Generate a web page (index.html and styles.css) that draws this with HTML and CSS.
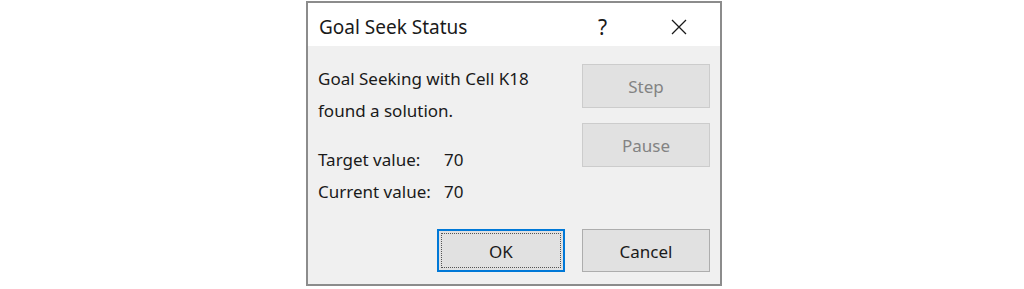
FILE: index.html
```html
<!DOCTYPE html>
<html lang="en">
<head>
  <meta charset="UTF-8">
  <title>Goal Seek Status</title>
  <link rel="stylesheet" href="styles.css">
</head>
<body>
  <div class="dialog">
    <div class="titlebar">
      <span class="title">Goal Seek Status</span>
      <span class="help">?</span>
      <span class="close">
        <svg width="16" height="16" viewBox="0 0 16 16">
          <path d="M1 1 L15 15 M15 1 L1 15" stroke="#1a1a1a" stroke-width="1.3" fill="none"/>
        </svg>
      </span>
    </div>

    <div class="body">
      <div class="main">
        <div class="msg">
          <p>Goal Seeking with Cell K18</p>
          <p>found a solution.</p>
          <div class="values">
            <div class="row"><span class="label">Target value:</span><span>70</span></div>
            <div class="row"><span class="label">Current value:</span><span>70</span></div>
          </div>
        </div>
        <div class="side">
          <button class="btn" disabled>Step</button>
          <button class="btn" disabled>Pause</button>
        </div>
      </div>
      <div class="footer">
        <button class="btn default"><span class="focus">OK</span></button>
        <button class="btn">Cancel</button>
      </div>
    </div>
  </div>
</body>
</html>
```

FILE: styles.css
```css
body {
  margin: 0;
  background: #ffffff;
  font-family: "Noto Sans", "Open Sans", sans-serif;
  color: #1a1a1a;
}

.dialog {
  margin: 1px 0 0 306px;
  width: 412px;
  height: 281px;
  border: 2px solid #8c8c8c;
  background: #f0f0f0;
  display: flex;
  flex-direction: column;
}

.titlebar {
  height: 43px;
  box-sizing: border-box;
  background: #ffffff;
  display: flex;
  align-items: center;
  padding: 4px 0 0 11px;
}

.title {
  font-size: 19px;
  flex: 1;
}

.help {
  font-size: 21px;
  width: 24px;
  margin-right: 49px;
}

.close {
  width: 16px;
  height: 16px;
  margin-right: 33px;
  display: flex;
}

.body {
  flex: 1;
  display: flex;
  flex-direction: column;
  padding: 0 10px 12px 10px;
}

.main {
  flex: 1;
  display: flex;
}

.msg {
  flex: 1;
  padding-top: 17px;
  font-size: 17px;
}

.msg p {
  margin: 0;
  line-height: 32px;
}

.values {
  margin-top: 17px;
}

.row {
  display: flex;
  line-height: 32px;
}

.label {
  width: 126px;
}

.side {
  display: flex;
  flex-direction: column;
  gap: 15px;
  padding-top: 18px;
}

.btn {
  width: 128px;
  height: 44px;
  background: #e1e1e1;
  border: 1px solid #adadad;
  font-family: inherit;
  font-size: 17px;
  color: #1a1a1a;
  padding: 1px 0 0 0;
}

.btn:disabled {
  color: #838383;
  border-color: #cccccc;
  background: #e1e1e1;
}

.footer {
  display: flex;
  justify-content: flex-end;
  gap: 17px;
  height: 43px;
}

.footer .btn {
  height: 43px;
}

.default {
  border: 2px solid #0078d7;
  padding: 2px;
  display: flex;
}

.focus {
  flex: 1;
  border: 1px dotted #555555;
  display: flex;
  align-items: center;
  justify-content: center;
  padding-top: 1px;
}
```
